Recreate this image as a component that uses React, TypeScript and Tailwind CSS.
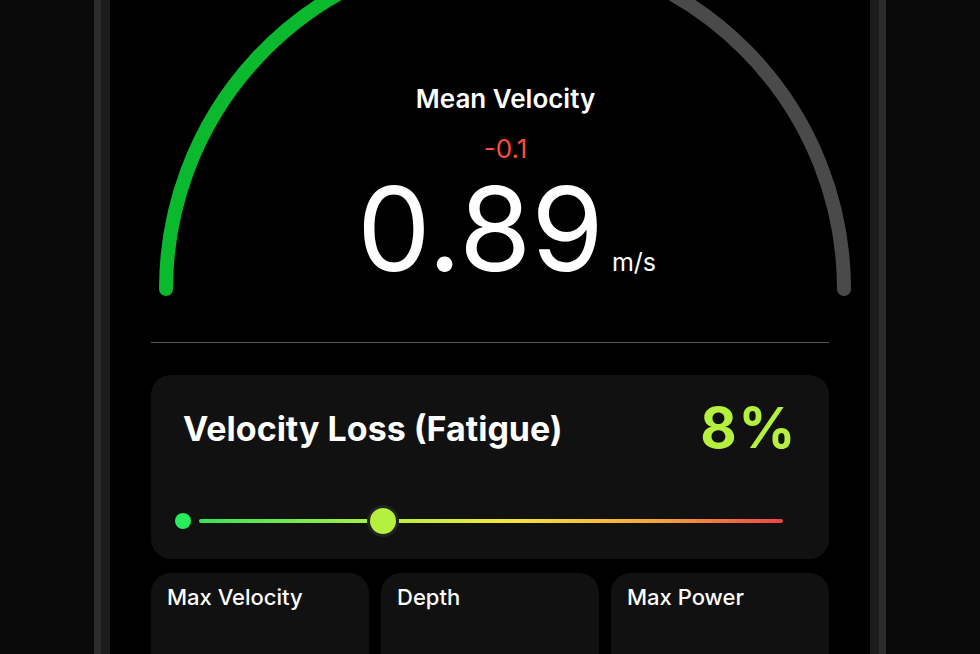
import React from "react";

const font = { fontFamily: "Inter, 'Noto Sans', sans-serif" };

function Gauge() {
  // semicircle gauge, green part is the current velocity share
  const cx = 350;
  const cy = 346;
  const r = 339;
  return (
    <svg width="700" height="360" viewBox="0 0 700 360" className="absolute left-[4px] top-0" aria-hidden>
      <path
        d={`M ${cx} ${cy - r} A ${r} ${r} 0 0 1 ${cx + r} ${cy}`}
        stroke="#4a4a4a"
        strokeWidth="14"
        fill="none"
        strokeLinecap="round"
      />
      <path
        d={`M ${cx - r} ${cy} A ${r} ${r} 0 0 1 ${cx - 30} ${cy - r + 1.4}`}
        stroke="#0ab92d"
        strokeWidth="14"
        fill="none"
        strokeLinecap="round"
      />
    </svg>
  );
}

function FatigueSlider() {
  return (
    <div className="flex items-center gap-2">
      <div className="h-4 w-4 shrink-0 rounded-full bg-[#27ec5c]" />
      <div className="relative h-[4px] flex-1 rounded-full bg-[linear-gradient(to_right,#34e45a,#b5f03f_32%,#f2e83a_52%,#f7a63b_78%,#ef4444)]">
        <div className="absolute left-[168px] top-1/2 h-8 w-8 -translate-y-1/2 rounded-full border-[3px] border-[#232323] bg-[#b5f03f]" />
      </div>
    </div>
  );
}

function StatCard({ label }: { label: string }) {
  return (
    <div className="h-[120px] rounded-[20px] bg-[#111111] px-4 pt-[13px]">
      <div className="text-[22px] font-medium leading-none text-white">{label}</div>
    </div>
  );
}

export default function App() {
  return (
    <div className="flex h-[654px] justify-center overflow-hidden bg-[#0a0a0a]" style={font}>
      <div className="-mt-[73px] h-[900px] w-[792px] shrink-0 rounded-[60px] border-[7px] border-[#2c2c2c]">
        <div className="h-full rounded-[52px] border-[9px] border-[#1c1c1c] bg-black">
          <div className="px-[41px]">
            <div className="relative h-[399px] pl-[31px]">
              <Gauge />
              <div className="relative flex flex-col items-center pt-[143px] text-white">
                <div className="text-[26px] font-semibold leading-none">Mean Velocity</div>
                <div className="mt-[24px] text-[26px] leading-none text-[#ff4b3a]">-0.1</div>
                <div className="mt-[8px] flex items-baseline pl-[2px]">
                  <span className="text-[117px] font-normal leading-none">0.89</span>
                  <span className="ml-[8px] text-[25px] leading-none">m/s</span>
                </div>
              </div>
            </div>
            <div className="h-px bg-[#5a5a5a]" />

            <div className="mt-[32px] h-[184px] rounded-[20px] bg-[#111111] px-8 pt-[28px]">
              <div className="flex items-start justify-between">
                <div className="mt-[9px] text-[34px] font-bold leading-none text-white">Velocity Loss (Fatigue)</div>
                <div className="-mt-[3px] text-[56px] font-bold leading-none tracking-[0.03em] text-[#b5f03f]">8%</div>
              </div>
              <div className="mt-[57px] -ml-[8px] mr-[14px]">
                <FatigueSlider />
              </div>
            </div>

            <div className="mt-[14px] grid grid-cols-3 gap-3">
              <StatCard label="Max Velocity" />
              <StatCard label="Depth" />
              <StatCard label="Max Power" />
            </div>
          </div>
        </div>
      </div>
    </div>
  );
}
